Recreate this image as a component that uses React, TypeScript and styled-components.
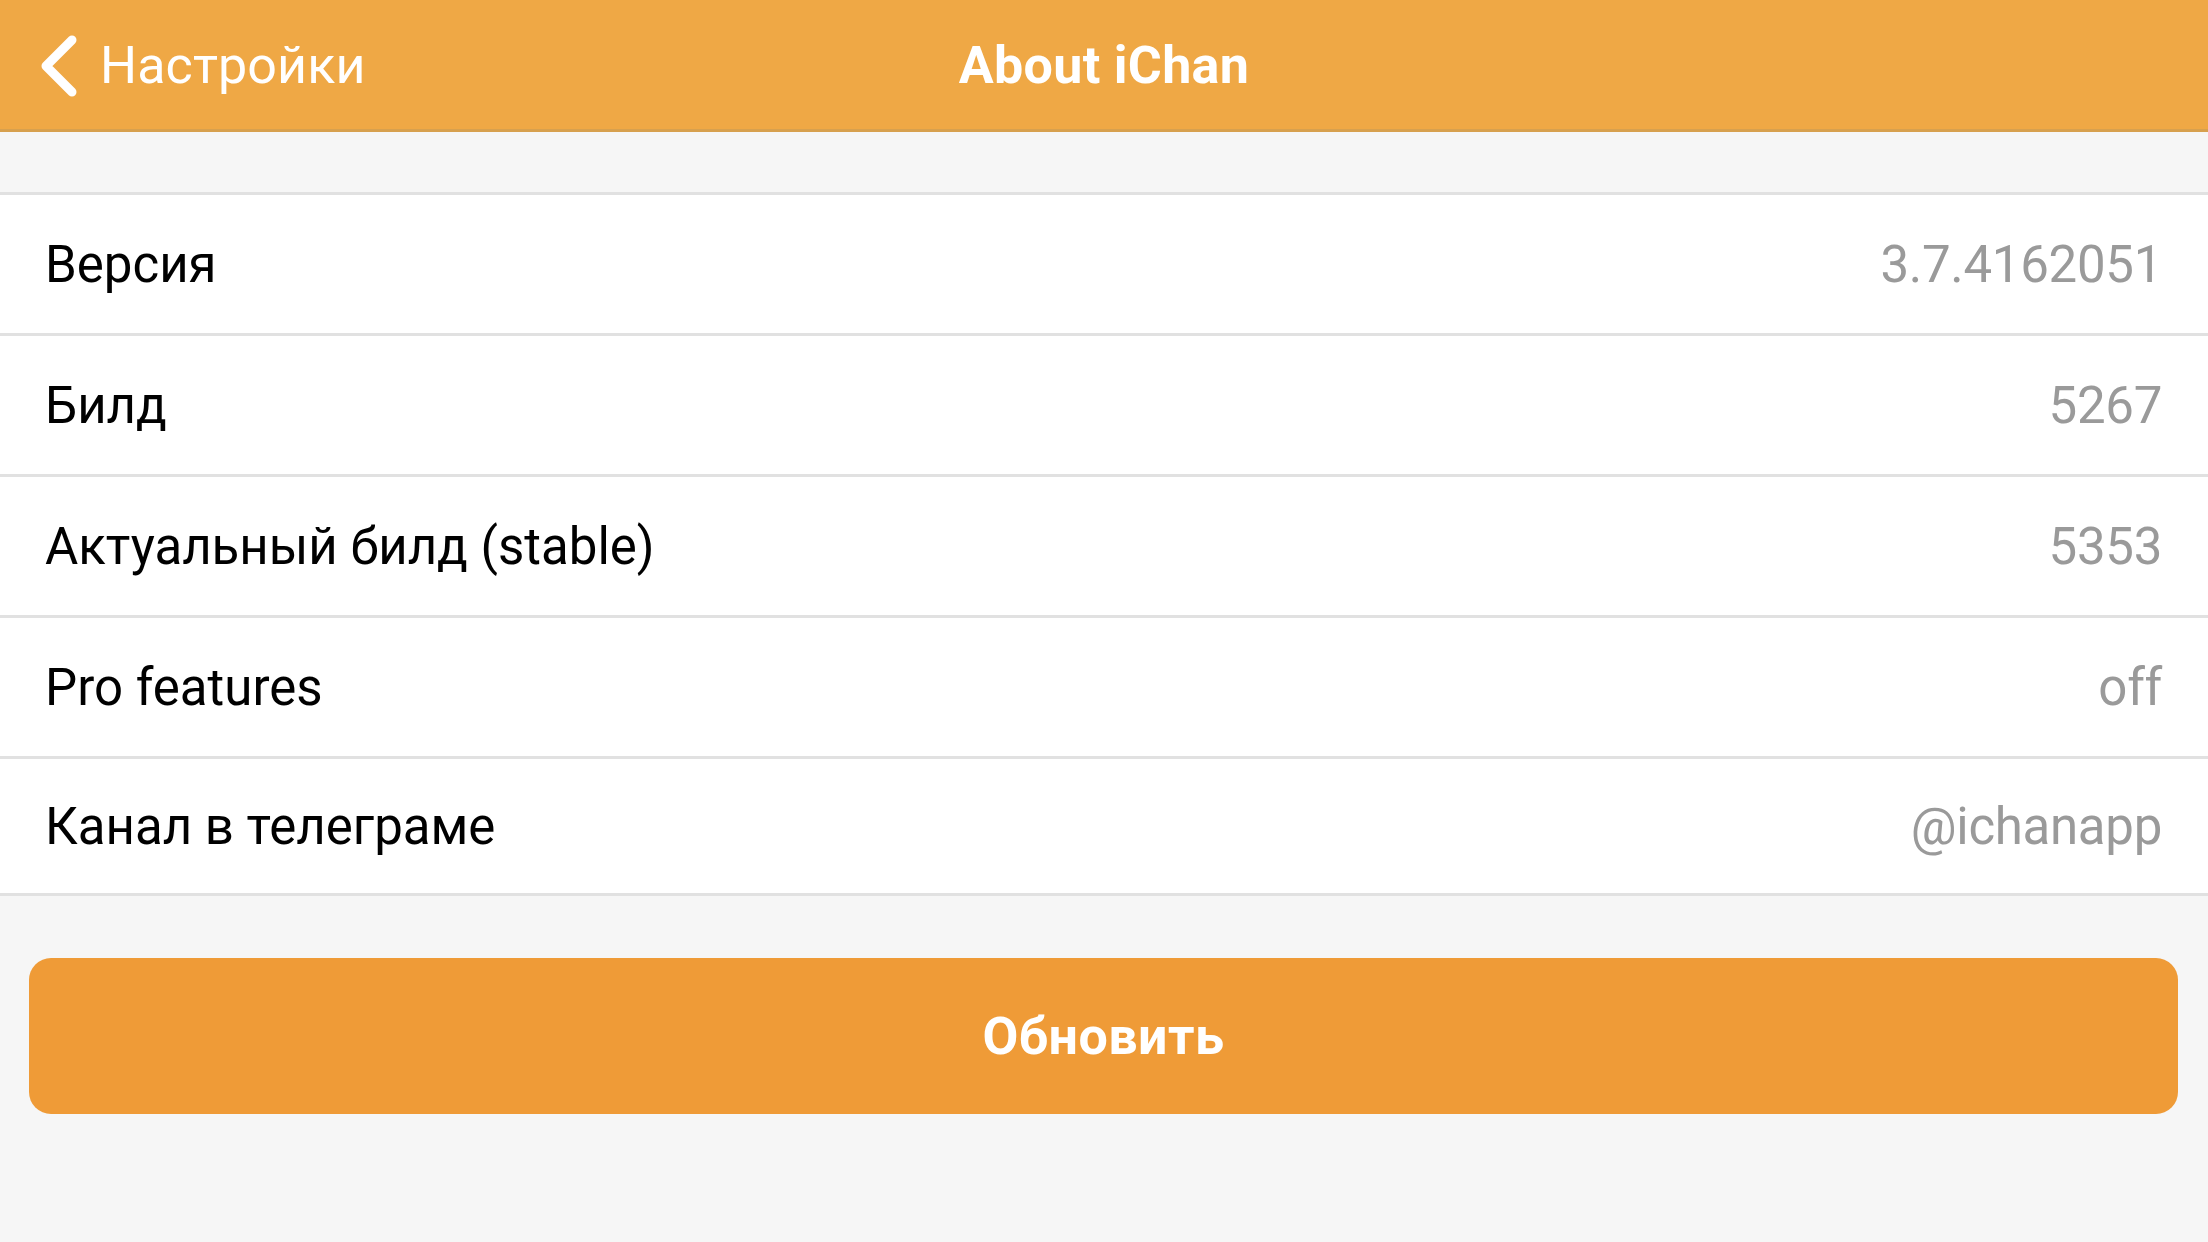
import React from "react";
import styled, { createGlobalStyle } from "styled-components";

const Global = createGlobalStyle`
  html, body { margin: 0; padding: 0; background: #f6f6f6; }
  body { font-family: "Roboto", "Inter", "Noto Sans", sans-serif; -webkit-font-smoothing: antialiased; }
  * { box-sizing: border-box; }
`;

const Page = styled.div`
  width: 2208px;
  height: 1242px;
  background: #f6f6f6;
  display: flex;
  flex-direction: column;
  overflow: hidden;
`;

const NavBar = styled.header`
  height: 132px;
  background: #efa845;
  border-bottom: 3px solid #d7a04e;
  display: grid;
  grid-template-columns: 1fr auto 1fr;
  align-items: center;
  color: #fff;
`;

const BackButton = styled.div`
  display: flex;
  align-items: center;
  gap: 22px;
  padding-left: 38px;
  font-size: 52px;
  font-weight: 400;
  letter-spacing: 0.1px;
  padding-top: 2px;
`;

const Title = styled.h1`
  margin: 0;
  font-size: 52px;
  font-weight: 700;
  letter-spacing: 0.3px;
  padding-top: 2px;
`;

const Spacer = styled.div`
  height: 60px;
`;

const Group = styled.div`
  background: #fff;
  border-top: 3px solid #e1e1e1;
  display: flex;
  flex-direction: column;
`;

const Row = styled.div<{ $last?: boolean }>`
  height: ${(p) => (p.$last ? 137 : 141)}px;
  display: flex;
  align-items: center;
  justify-content: space-between;
  padding: 0 46px 0 45px;
  border-bottom: 3px solid #e1e1e1;
  font-size: 51px;
`;

const Label = styled.span`
  color: #000;
`;

const Value = styled.span`
  color: #9a9a9a;
  letter-spacing: -0.3px;
`;

const ButtonWrap = styled.div`
  padding: 62px 30px 0 29px;
`;

const UpdateButton = styled.button`
  width: 100%;
  height: 156px;
  border: none;
  border-radius: 22px;
  background: #ef9b37;
  color: #fff;
  font-family: inherit;
  font-size: 52px;
  font-weight: 700;
  letter-spacing: 0.5px;
`;

const rows = [
  ["Версия", "3.7.4162051"],
  ["Билд", "5267"],
  ["Актуальный билд (stable)", "5353"],
  ["Pro features", "off"],
  ["Канал в телеграме", "@ichanapp"],
];

export default function App() {
  return (
    <Page>
      <Global />
      <NavBar>
        <BackButton>
          <svg width="40" height="62" viewBox="0 0 40 62">
            <polyline
              points="34,5 8,31 34,57"
              fill="none"
              stroke="#fff"
              strokeWidth="9"
              strokeLinecap="round"
              strokeLinejoin="round"
            />
          </svg>
          <span>Настройки</span>
        </BackButton>
        <Title>About iChan</Title>
        <div />
      </NavBar>
      <Spacer />
      <Group>
        {rows.map(([l, v], i) => (
          <Row key={l} $last={i === rows.length - 1}>
            <Label>{l}</Label>
            <Value>{v}</Value>
          </Row>
        ))}
      </Group>
      <ButtonWrap>
        <UpdateButton>Обновить</UpdateButton>
      </ButtonWrap>
    </Page>
  );
}
